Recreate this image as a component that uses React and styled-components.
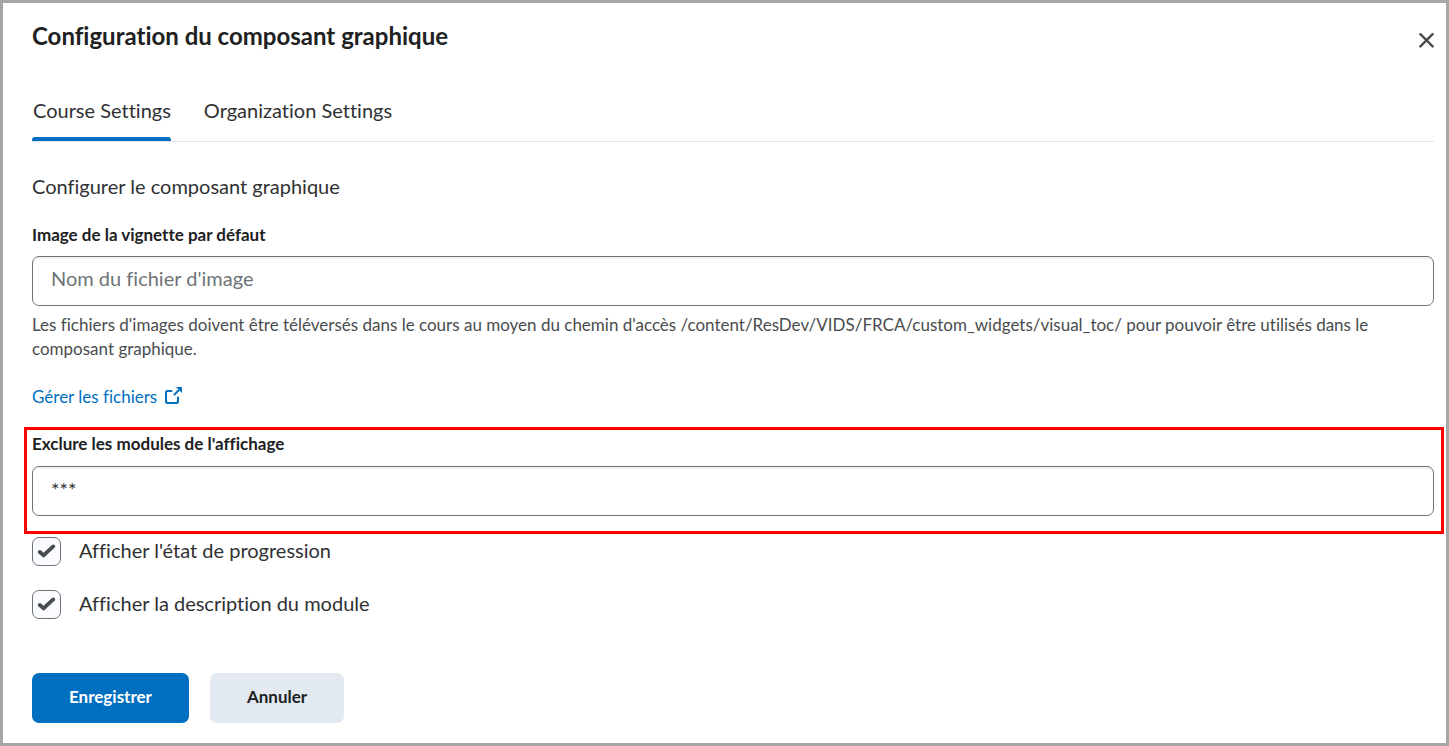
import React, { useState } from "react";
import styled, { createGlobalStyle } from "styled-components";

const colors = {
  text: "#202122",
  body: "#303133",
  muted: "#494c4e",
  icon: "#494c4e",
  placeholder: "#6e7376",
  border: "#6e7376",
  line: "#e3e5ef",
  blue: "#006fbf",
  grey: "#e3e9f1",
  frame: "#a6a6a6",
  red: "#ff0000"
};

const GlobalStyle = createGlobalStyle`
  *, *::before, *::after {
    box-sizing: border-box;
  }
  body {
    margin: 0;
    background: #fff;
    color: ${colors.body};
    font-family: Lato, "Open Sans", sans-serif;
    font-size: 20px;
    font-variant-ligatures: none;
    line-height: 28px;
  }
  button, input, textarea {
    font-family: inherit;
    font-variant-ligatures: inherit;
  }
`;

const Dialog = styled.div`
  display: flex;
  flex-direction: column;
  min-height: 100vh;
  padding: 18px 12px 20px 29px;
  border: 3px solid ${colors.frame};
`;

const Header = styled.header`
  display: flex;
  justify-content: space-between;
  align-items: flex-start;
`;

const Title = styled.h1`
  margin: 0;
  color: ${colors.text};
  font-size: 24px;
  line-height: 30px;
  font-weight: 700;
`;

const CloseButton = styled.button`
  display: flex;
  margin-top: 11px;
  padding: 0;
  border: 0;
  background: none;
  color: ${colors.icon};
  cursor: pointer;
`;

const Tabs = styled.div`
  display: flex;
  gap: 32px;
  margin-top: 42px;
  border-bottom: 1px solid ${colors.line};
`;

const Tab = styled.button`
  display: flex;
  flex-direction: column;
  justify-content: space-between;
  height: 48px;
  padding: 3px 0 0;
  border: 0;
  background: none;
  color: ${colors.body};
  font-size: 20px;
  line-height: 28px;
  cursor: pointer;

  &::after {
    content: "";
    width: 100%;
    height: 4px;
    border-radius: 3px 3px 0 0;
    background: ${props => props.$active ? colors.blue : "transparent"};
  }
`;

const TabText = styled.span`
  padding-left: 1px;
`;

const Form = styled.form`
  display: flex;
  flex-direction: column;
  align-items: stretch;
  margin-top: 30px;
`;

const Intro = styled.p`
  margin: 0;
`;

const Field = styled.div`
  display: flex;
  flex-direction: column;
  gap: 9px;
  margin-top: 22px;
`;

const Highlight = styled.div`
  display: flex;
  flex-direction: column;
  gap: 10px;
  margin: 18px -10px 0 -8px;
  padding: 1px 7px 15px 5px;
  border: 3px solid ${colors.red};
`;

const Label = styled.label`
  color: ${colors.text};
  font-size: 17px;
  line-height: 25px;
  font-weight: 700;
`;

const TextInput = styled.input`
  width: 100%;
  height: 50px;
  padding: 0 18px 6px;
  border: 1px solid ${colors.border};
  border-radius: 7px;
  background: #fff;
  box-shadow: inset 0 2px 0 0 rgba(181, 189, 194, 0.2);
  color: ${colors.body};
  font-size: 20px;
  outline: none;

  &::placeholder {
    color: ${colors.placeholder};
    opacity: 1;
  }
`;

const TextArea = styled(TextInput).attrs({ as: "textarea" })`
  display: block;
  padding: 8px 18px;
  line-height: 28px;
  overflow: hidden;
  resize: none;
`;

const Help = styled.p`
  margin: 7px 0 0;
  color: ${colors.muted};
  font-size: 17px;
  line-height: 24px;
`;

const FileLink = styled.a`
  display: flex;
  align-items: center;
  align-self: flex-start;
  gap: 8px;
  margin-top: 24px;
  color: ${colors.blue};
  font-size: 17px;
  line-height: 24px;
  text-decoration: none;
`;

const LinkIcon = styled.svg`
  margin-bottom: 4px;
`;

const Checks = styled.div`
  display: flex;
  flex-direction: column;
  gap: 24px;
  margin-top: 3px;
`;

const CheckLabel = styled.label`
  display: flex;
  gap: 18px;
  height: 29px;
  line-height: 26px;
  cursor: pointer;
`;

const CheckInput = styled.input`
  appearance: none;
  width: 29px;
  height: 29px;
  margin: 0;
  border: 1px solid ${colors.border};
  border-radius: 7px;
  background: #f9fbff;
`;

const CheckBox = styled.span`
  display: grid;

  > * {
    grid-area: 1 / 1;
  }
  svg {
    place-self: center;
    pointer-events: none;
  }
`;

const Actions = styled.div`
  display: flex;
  gap: 21px;
  margin-top: 54px;
`;

const Button = styled.button`
  height: 50px;
  padding: 0 37px 4px;
  border: 0;
  border-radius: 7px;
  background: ${props => props.$primary ? colors.blue : colors.grey};
  color: ${props => props.$primary ? "#fff" : colors.text};
  font-size: 17px;
  font-weight: 700;
  cursor: pointer;
`;

const Check = ({ label, checked, onChange }) => (
  <CheckLabel>
    <CheckBox>
      <CheckInput type="checkbox" checked={checked} onChange={onChange} />
      {checked && (
        <svg width="19" height="15" viewBox="0 0 19 15" aria-hidden="true">
          <path
            d="M2.8 8 L6.6 11.4 L16.2 2.4"
            fill="none"
            stroke={colors.icon}
            strokeWidth="3.8"
            strokeLinecap="round"
            strokeLinejoin="round"
          />
        </svg>
      )}
    </CheckBox>
    <span>{label}</span>
  </CheckLabel>
);

const tabs = ["Course Settings", "Organization Settings"];

const App = () => {
  const [tab, setTab] = useState(0);
  const [image, setImage] = useState("");
  const [excluded, setExcluded] = useState("***");
  const [progress, setProgress] = useState(true);
  const [description, setDescription] = useState(true);

  return (
    <>
      <GlobalStyle />
      <Dialog role="dialog" aria-labelledby="title">
        <Header>
          <Title id="title">Configuration du composant graphique</Title>
          <CloseButton type="button" aria-label="Fermer">
            <svg width="15" height="16" viewBox="0 0 15 16">
              <path
                d="M1.4 2.2 L13.6 14.4 M13.6 2.2 L1.4 14.4"
                stroke="currentColor"
                strokeWidth="2.4"
                strokeLinecap="round"
              />
            </svg>
          </CloseButton>
        </Header>
        <Tabs role="tablist">
          {tabs.map((name, index) => (
            <Tab
              key={name}
              type="button"
              role="tab"
              aria-selected={tab === index}
              $active={tab === index}
              onClick={() => setTab(index)}
            >
              <TabText>{name}</TabText>
            </Tab>
          ))}
        </Tabs>
        <Form onSubmit={e => e.preventDefault()}>
          <Intro>Configurer le composant graphique</Intro>
          <Field>
            <Label htmlFor="image">Image de la vignette par défaut</Label>
            <TextInput
              id="image"
              type="text"
              placeholder="Nom du fichier d'image"
              value={image}
              onChange={e => setImage(e.target.value)}
            />
          </Field>
          <Help>
            Les fichiers d'images doivent être téléversés dans le cours au moyen du chemin d'accès
            /content/ResDev/VIDS/FRCA/custom_widgets/visual_toc/ pour pouvoir être utilisés dans le
            composant graphique.
          </Help>
          <FileLink href="#fichiers">
            Gérer les fichiers
            <LinkIcon width="17" height="17" viewBox="0 0 17 17" aria-hidden="true">
              <path
                d="M6.5 4 H2.5 Q1 4 1 5.5 V14.5 Q1 16 2.5 16 H11.5 Q13 16 13 14.5 V10.5"
                fill="none"
                stroke="currentColor"
                strokeWidth="2"
                strokeLinecap="round"
              />
              <path d="M9.5 7.5 L13.5 3.5" stroke="currentColor" strokeWidth="2" strokeLinecap="round" />
              <path d="M11 0 H16 Q17 0 17 1 V6 Z" fill="currentColor" />
            </LinkIcon>
          </FileLink>
          <Highlight>
            <Label htmlFor="excluded">Exclure les modules de l'affichage</Label>
            <TextArea
              id="excluded"
              rows={1}
              value={excluded}
              onChange={e => setExcluded(e.target.value)}
            />
          </Highlight>
          <Checks>
            <Check
              label="Afficher l'état de progression"
              checked={progress}
              onChange={() => setProgress(!progress)}
            />
            <Check
              label="Afficher la description du module"
              checked={description}
              onChange={() => setDescription(!description)}
            />
          </Checks>
          <Actions>
            <Button type="submit" $primary>Enregistrer</Button>
            <Button type="button">Annuler</Button>
          </Actions>
        </Form>
      </Dialog>
    </>
  );
};

export default App;
